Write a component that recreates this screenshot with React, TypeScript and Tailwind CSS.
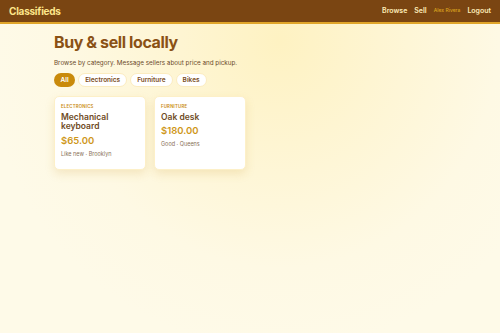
import React from 'react';

type Listing = {
  id: number;
  category: string;
  title: string;
  price: string;
  meta: string;
};

const listings: Listing[] = [
  { id: 1, category: 'Electronics', title: 'Mechanical keyboard', price: '$65.00', meta: 'Like new · Brooklyn' },
  { id: 2, category: 'Furniture', title: 'Oak desk', price: '$180.00', meta: 'Good · Queens' },
];

const categories = ['All', 'Electronics', 'Furniture', 'Bikes'];

export default function App() {
  return (
    <div className="min-h-[333px] w-full bg-[#fefae8] bg-[radial-gradient(ellipse_at_56%_12%,#fef2c2_0%,#fef5d2_25%,#fef9e4_55%,#fefae8_75%)] font-['Inter','Liberation_Sans',sans-serif]">
      {/* Top bar */}
      <header className="flex h-[24px] items-center justify-between border-b-2 border-[#e0a52a] bg-[#7a4512] pl-[9px] pr-[9px]">
        <span className="text-[10px] font-bold tracking-tight text-[#fde68a]">Classifieds</span>
        <nav className="flex items-center gap-[7px] text-[7px] font-semibold text-[#fdecb8]">
          <span>Browse</span>
          <span>Sell</span>
          <span className="text-[5px] font-medium text-[#d9a21f]">Alex Rivera</span>
          <span>Logout</span>
        </nav>
      </header>

      <main className="px-[54px] pt-[8px]">
        <h1 className="text-[16px] font-bold leading-[20px] tracking-tight text-[#8a5115]">Buy &amp; sell locally</h1>
        <p className="mt-[7px] text-[6.3px] text-[#6b4a2a]">
          Browse by category. Message sellers about price and pickup.
        </p>

        <div className="mt-[5px] flex gap-[3px]">
          {categories.map((c, i) => (
            <span
              key={c}
              className={
                i === 0
                  ? 'flex h-[14px] items-center rounded-full bg-[#c98a0b] px-[6.5px] text-[6.5px] font-semibold text-white'
                  : 'flex h-[14px] items-center rounded-full border border-[#fcecc0] bg-white px-[6px] text-[6.5px] font-semibold text-[#7a4b1c]'
              }
            >
              {c}
            </span>
          ))}
        </div>

        <div className="mt-[9px] flex gap-[8px]">
          {listings.map((l) => (
            <div
              key={l.id}
              className="flex h-[74px] w-[92px] flex-col rounded-[5px] border border-[#fdf0c8] bg-white px-[6px] pt-[7px] shadow-[0_4px_10px_rgba(200,150,40,0.18)]"
            >
              <span className="text-[4.3px] font-semibold uppercase tracking-wider text-[#c98a0b]">{l.category}</span>
              <span className="mt-[2px] text-[8.5px] font-semibold leading-[9.5px] text-[#6e4a24]">{l.title}</span>
              <span className="mt-[2px] text-[9.5px] font-semibold leading-[13px] text-[#cf971a]">{l.price}</span>
              <span className="mt-[3px] text-[5.5px] text-[#8a7258]">{l.meta}</span>
            </div>
          ))}
        </div>
      </main>
    </div>
  );
}
